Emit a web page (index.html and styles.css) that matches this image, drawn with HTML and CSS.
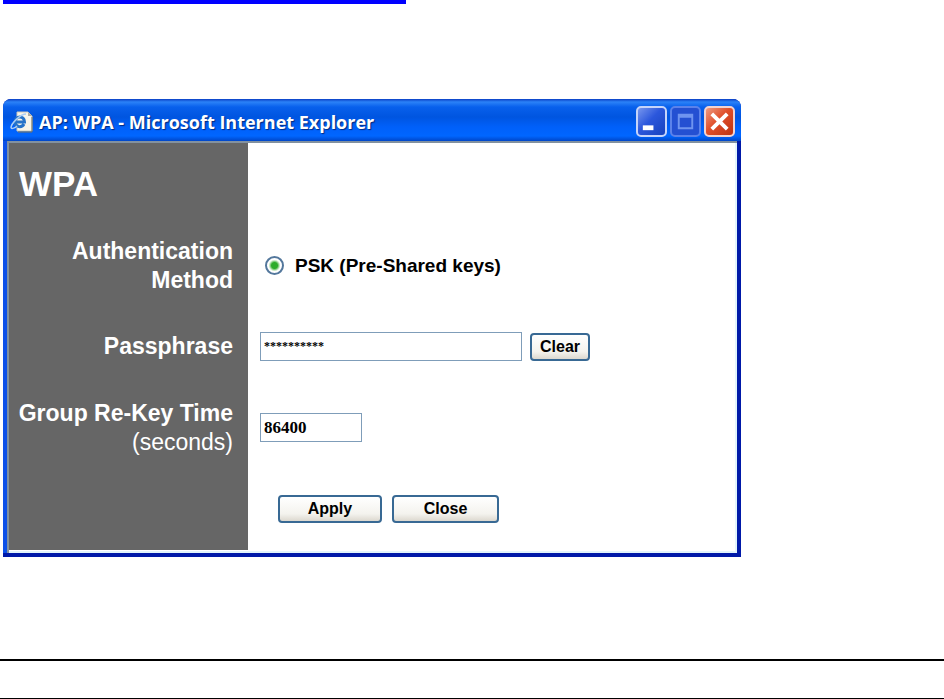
FILE: index.html
```html
<!DOCTYPE html>
<html lang="en">
<head>
<meta charset="utf-8">
<meta name="viewport" content="width=device-width, initial-scale=1">
<title>AP: WPA</title>
<link rel="stylesheet" href="styles.css">
</head>
<body>
<div class="link-rule"></div>
<main class="window">
  <header class="titlebar">
    <svg class="app-icon" viewBox="0 0 24 22" aria-hidden="true">
      <path d="M7 1h11l4 4v15H7z" fill="#f7f5ea" stroke="#c9c7bb" stroke-width="1"/>
      <path d="M18 1v4h4z" fill="#a9aaa6"/>
      <path d="M22 6v15H8" fill="none" stroke="#77735f" stroke-width="1"/>
      <path d="M5 11h9.500c0-7-9.500-6.500-9.500 0 0 5.500 7 6 9 2" fill="none" stroke="#2573c9" stroke-width="3"/>
      <path d="M1 17C1 12 11 3 16 3M1 17c1 1 4 0 6-2" fill="none" stroke="#a9cdf5" stroke-width="1.500"/>
    </svg>
    <h1 class="caption">AP: WPA - Microsoft Internet Explorer</h1>
    <div class="window-buttons">
      <button class="window-button" type="button" aria-label="Minimize">
        <svg viewBox="0 0 28 28" aria-hidden="true"><path d="M5 18h11v5H5z" fill="#fff"/></svg>
      </button>
      <button class="window-button maximize" type="button" aria-label="Maximize" disabled>
        <svg viewBox="0 0 28 28" aria-hidden="true"><path d="M7 7h14v14H7zM7 9h14" fill="none" stroke="#6f94ef" stroke-width="2"/></svg>
      </button>
      <button class="window-button close" type="button" aria-label="Close window">
        <svg viewBox="0 0 28 28" aria-hidden="true"><path d="M6 6l16 16M22 6L6 22" fill="none" stroke="#fff" stroke-width="4"/></svg>
      </button>
    </div>
  </header>
  <form class="panel">
    <h2 class="side heading">WPA</h2>
    <div class="field"></div>

    <div class="side label" id="method">Authentication<br>Method</div>
    <div class="field" role="radiogroup" aria-labelledby="method">
      <label class="option"><input class="radio" type="radio" name="method" checked>PSK (Pre-Shared keys)</label>
    </div>

    <label class="side label" for="passphrase">Passphrase</label>
    <div class="field">
      <input class="text passphrase" id="passphrase" type="text" value="**********">
      <button class="button clear" type="button">Clear</button>
    </div>

    <label class="side label" for="rekey">Group Re-Key Time<span class="unit">(seconds)</span></label>
    <div class="field">
      <input class="text rekey" id="rekey" type="text" value="86400">
    </div>

    <div class="side"></div>
    <div class="field actions">
      <button class="button apply" type="button">Apply</button>
      <button class="button dismiss" type="button">Close</button>
    </div>
  </form>
</main>
<hr class="rule thick">
<hr class="rule">
</body>
</html>
```
FILE: styles.css
```css
* {
  box-sizing: border-box;
}

body {
  margin: 0;
  background: #fff;
  color: #000;
  font-family: "Liberation Sans", Arial, sans-serif;
}

.link-rule {
  width: 43%;
  max-width: 403px;
  height: 4px;
  margin-left: 3px;
  background: #00f;
}

.window {
  max-width: 738px;
  margin: 95px 3px 0;
  border: solid #0019a8;
  border-width: 0 4px 4px 0;
  border-radius: 8px 8px 0 0;
  background: #0019a8;
}

.titlebar {
  display: flex;
  align-items: center;
  height: 42px;
  padding: 3px 2px 0 7px;
  margin-right: -4px;
  border-radius: 8px 8px 0 0;
  background: linear-gradient(#0a3fc4 0, #2b82f8 3px, #0860ec 8px, #0055e0 18px, #0060fa 28px, #0066ff 37px, #0046c8 100%);
}

.app-icon {
  flex: none;
  width: 24px;
  height: 22px;
}

.caption {
  flex: 1;
  margin: 0 0 0 5px;
  color: #fff;
  font: bold 18px/24px "Open Sans", sans-serif;
  text-shadow: 1px 1px 1px #002a80;
  white-space: nowrap;
}

.window-buttons {
  display: flex;
  gap: 3px;
  padding-right: 4px;
}

.window-button {
  width: 31px;
  height: 31px;
  padding: 0;
  border: 2px solid #c5d4fa;
  border-radius: 5px;
  background: linear-gradient(135deg, #7796ee, #2b57dc 45%, #1742bd);
}

.window-button svg {
  display: block;
}

.window-button.maximize {
  border-color: #5b82ea;
  background: #2450d2;
}

.window-button.close {
  border-color: #f3d3d0;
  background: linear-gradient(135deg, #ee9a80, #e04f2a 45%, #bd3210);
}

.panel {
  display: grid;
  grid-template-columns: 239px 1fr;
  grid-template-rows: 82px repeat(3, minmax(81px, auto)) 82px;
  border: solid #0c50e8;
  border-width: 0 0 0 4px;
  background: #fff;
  box-shadow: inset 2px 2px #8291a0, inset -2px -2px #e2f4fc;
  padding: 2px 2px 3px;
}

.side {
  display: flex;
  flex-direction: column;
  justify-content: center;
  padding: 0 15px 0 8px;
  margin: 0;
  background: #666;
  color: #fff;
  text-align: right;
}

.heading {
  padding-left: 10px;
  font-size: 35px;
  line-height: 40px;
  text-align: left;
}

.label {
  font-size: 23px;
  font-weight: bold;
  line-height: 29px;
  white-space: nowrap;
}

.unit {
  font-weight: normal;
}

.field {
  display: flex;
  align-items: center;
  gap: 8px;
  padding-left: 12px;
}

.option {
  display: flex;
  align-items: center;
  gap: 11px;
  padding-left: 5px;
  font-size: 19px;
  font-weight: bold;
  line-height: 24px;
}

.radio {
  appearance: none;
  width: 19px;
  height: 19px;
  margin: 0;
  border: 2px solid #53779c;
  border-radius: 50%;
  background: radial-gradient(circle, #2eac2b 0 3px, #c9e9c4 5px, #fff 6px);
}

.text {
  height: 29px;
  margin: 0;
  padding: 0 3px;
  border: 1px solid #7f9db9;
  background: #fff;
  color: #000;
  font-family: "Liberation Serif", "Times New Roman", serif;
  font-weight: bold;
}

.passphrase {
  flex: 0 1 262px;
  min-width: 0;
  font-size: 12px;
}

.rekey {
  width: 102px;
  font-size: 17px;
}

.button {
  height: 28px;
  padding: 0;
  border: 2px solid #386994;
  border-radius: 4px;
  background: linear-gradient(#fff, #f4f3ee 70%, #dcd8cf);
  color: #000;
  font: bold 16px/20px "Liberation Sans", Arial, sans-serif;
}

.clear {
  width: 60px;
}

.actions {
  gap: 10px;
  padding-left: 30px;
}

.apply {
  width: 104px;
}

.dismiss {
  width: 107px;
}

.rule {
  height: 1px;
  margin: 37px 0 0;
  border: 0;
  background: #000;
}

.rule.thick {
  height: 2px;
  margin-top: 102px;
}
```
